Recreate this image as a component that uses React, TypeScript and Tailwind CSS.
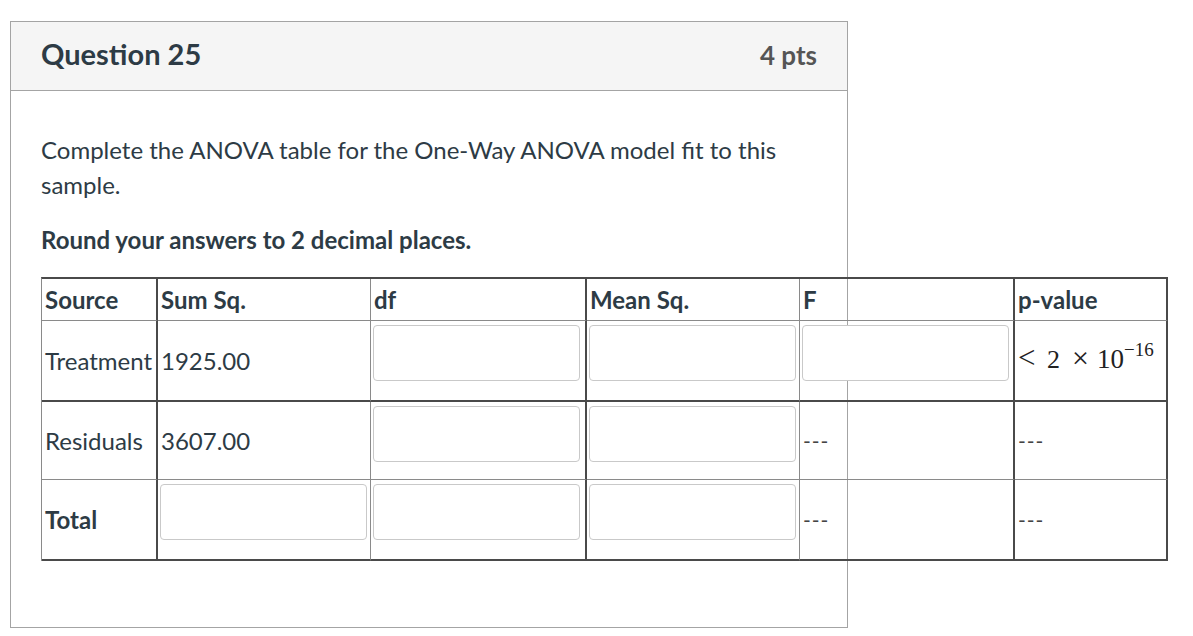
import React from "react";

type Line = "dark" | "light";

function Cell({
  r,
  b,
  children,
  top,
  className = "",
}: {
  r: Line;
  b: Line;
  children?: React.ReactNode;
  top?: boolean;
  className?: string;
}) {
  const rc = r === "dark" ? "border-r-2 border-r-[#4a4a4a]" : "border-r border-r-[#8a8a8a]";
  const bc = b === "dark" ? "border-b-2 border-b-[#4a4a4a]" : "border-b border-b-[#8a8a8a]";
  const al = top ? "items-start pt-[4px] pl-[2px]" : "items-center pl-[3px]";
  return <div className={`flex ${al} ${rc} ${bc} ${className}`}>{children}</div>;
}

function Box() {
  return (
    <div className="w-[207px] h-[56px] rounded-[4px] border border-[#c9c9c9] bg-white shrink-0" />
  );
}

export default function App() {
  const rows: Line[] = ["light", "dark", "light", "dark"];
  const cols: Line[] = ["dark", "light", "dark", "light", "dark", "dark"];
  const txt = "text-[24px] text-[#2d3b45]";
  const dash = <span className="text-[21px] text-[#444] tracking-[1px]">---</span>;
  return (
    <div
      className="w-[1193px] h-[636px] bg-white pt-[21px] pl-[10px] overflow-hidden"
      style={{ fontFamily: "Lato, 'Noto Sans', sans-serif" }}
    >
      <div className="w-[838px] h-[607px] border border-[#a4a4a4] flex flex-col">
        <div className="h-[69px] bg-[#f5f5f5] border-b border-b-[#a4a4a4] flex items-center justify-between px-[30px] shrink-0">
          <div className="text-[29px] font-bold text-[#2d3b45] mt-[-4px]">Question 25</div>
          <div className="text-[26px] font-bold text-[#555] mt-[-2px]">4 pts</div>
        </div>
        <div className="pl-[30px] pr-[30px] pt-[41px]">
          <p className="text-[24px] leading-[35px] text-[#2d3b45]">
            Complete the ANOVA table for the One-Way ANOVA model fit to this sample.
          </p>
          <p className="mt-[20px] text-[24px] leading-[35px] font-bold text-[#2d3b45]">
            Round your answers to 2 decimal places.
          </p>
          <div
            className="mt-[20px] grid w-[1127px] border-l border-l-[#8a8a8a] border-t-2 border-t-[#4a4a4a]"
            style={{
              gridTemplateColumns: "116px 213px 216px 213px 215px 153px",
              gridTemplateRows: "42px 81px 78px 81px",
            }}
          >
            {/* header */}
            <Cell r={cols[0]} b={rows[0]}>
              <span className={`${txt} font-bold`}>Source</span>
            </Cell>
            <Cell r={cols[1]} b={rows[0]}>
              <span className={`${txt} font-bold`}>Sum Sq.</span>
            </Cell>
            <Cell r={cols[2]} b={rows[0]}>
              <span className={`${txt} font-bold`}>df</span>
            </Cell>
            <Cell r={cols[3]} b={rows[0]}>
              <span className={`${txt} font-bold`}>Mean Sq.</span>
            </Cell>
            <Cell r={cols[4]} b={rows[0]}>
              <span className={`${txt} font-bold`}>F</span>
            </Cell>
            <Cell r={cols[5]} b={rows[0]}>
              <span className={`${txt} font-bold`}>p-value</span>
            </Cell>

            {/* Treatment */}
            <Cell r={cols[0]} b={rows[1]}>
              <span className={txt}>Treatment</span>
            </Cell>
            <Cell r={cols[1]} b={rows[1]}>
              <span className={txt}>1925.00</span>
            </Cell>
            <Cell r={cols[2]} b={rows[1]} top>
              <Box />
            </Cell>
            <Cell r={cols[3]} b={rows[1]} top>
              <Box />
            </Cell>
            <Cell r={cols[4]} b={rows[1]} top>
              <Box />
            </Cell>
            <Cell r={cols[5]} b={rows[1]}>
              <span
                className="text-[24px] text-[#222] flex items-baseline mt-[-4px] whitespace-nowrap"
                style={{ fontFamily: "'Liberation Serif', 'DejaVu Serif', serif" }}
              >
                <span className="w-[29px] text-[31px] font-light">&lt;</span>
                <span className="w-[25px] text-[26px]">2</span>
                <span className="w-[25px] text-[30px]">×</span>
                <span className="text-[27px]">10</span>
                <span className="text-[19px] relative -top-[12px]">−16</span>
              </span>
            </Cell>

            {/* Residuals */}
            <Cell r={cols[0]} b={rows[2]}>
              <span className={txt}>Residuals</span>
            </Cell>
            <Cell r={cols[1]} b={rows[2]}>
              <span className={txt}>3607.00</span>
            </Cell>
            <Cell r={cols[2]} b={rows[2]} top>
              <Box />
            </Cell>
            <Cell r={cols[3]} b={rows[2]} top>
              <Box />
            </Cell>
            <Cell r={cols[4]} b={rows[2]}>{dash}</Cell>
            <Cell r={cols[5]} b={rows[2]}>{dash}</Cell>

            {/* Total */}
            <Cell r={cols[0]} b={rows[3]}>
              <span className={`${txt} font-bold`}>Total</span>
            </Cell>
            <Cell r={cols[1]} b={rows[3]} top>
              <Box />
            </Cell>
            <Cell r={cols[2]} b={rows[3]} top>
              <Box />
            </Cell>
            <Cell r={cols[3]} b={rows[3]} top>
              <Box />
            </Cell>
            <Cell r={cols[4]} b={rows[3]}>{dash}</Cell>
            <Cell r={cols[5]} b={rows[3]}>{dash}</Cell>
          </div>
        </div>
      </div>
    </div>
  );
}
